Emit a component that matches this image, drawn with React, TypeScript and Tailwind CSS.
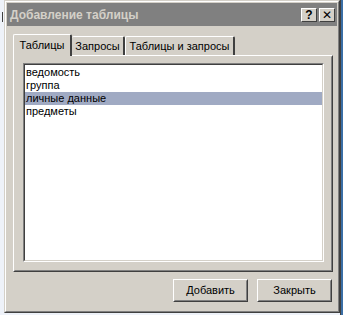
import React from "react";

const items = ["ведомость", "группа", "личные данные", "предметы"];

const font = { fontFamily: '"Liberation Sans", "DejaVu Sans", sans-serif' };

function Btn({ label }: { label: string }) {
  return (
    <button className="w-[75px] h-[23px] border border-t-white border-l-white border-r-[#404040] border-b-[#404040] bg-[#d4d0c8] p-0">
      <div className="w-full h-full border border-t-[#d4d0c8] border-l-[#d4d0c8] border-r-[#808080] border-b-[#808080] flex items-center justify-center text-[11px] text-black">
        {label}
      </div>
    </button>
  );
}

function TitleBtn({ children }: { children: React.ReactNode }) {
  return (
    <div className="w-[16px] h-[14px] bg-[#d4d0c8] border border-t-white border-l-white border-r-[#404040] border-b-[#404040] flex items-center justify-center text-[12px] font-bold leading-none text-black">
      {children}
    </div>
  );
}

export default function App() {
  return (
    <div className="w-[343px] h-[315px] bg-[#eef2f9] flex overflow-hidden" style={font}>
      <div className="w-[4px] h-full flex flex-col">
        <div className="mt-[12px] ml-[2px] w-[1px] h-[10px] bg-[#404040]" />
      </div>
      <div className="w-[336px] h-[313px] border border-t-[#d4d0c8] border-l-[#d4d0c8] border-r-[#404040] border-b-[#404040] bg-[#d4d0c8]">
        <div className="w-full h-full border border-t-white border-l-white border-r-[#808080] border-b-[#808080] p-[1px] flex flex-col">
          {/* title bar */}
          <div className="h-[23px] bg-[#808080] flex items-center pl-[3px] pr-[2px]">
            <span className="text-[12px] font-bold text-[#d4d0c8] flex-1">Добавление таблицы</span>
            <div className="flex gap-[2px]">
              <TitleBtn>?</TitleBtn>
              <TitleBtn>✕</TitleBtn>
            </div>
          </div>
          {/* tabs */}
          <div className="px-[6px] pt-[7px] flex flex-col">
            <div className="flex items-end h-[22px] text-[11px] text-black">
              <div className="relative z-10 w-[59px] h-[22px] -mb-[1px] bg-[#d4d0c8] border-l border-t border-white border-r-2 border-r-[#404040] rounded-t-[2px] flex items-center justify-center">
                Таблицы
              </div>
              <div className="w-[53px] h-[19px] border-t border-white border-r-2 border-r-[#404040] rounded-t-[2px] flex items-center justify-center">
                Запросы
              </div>
              <div className="w-[110px] h-[19px] border-l border-t border-white border-r-2 border-r-[#404040] rounded-t-[2px] flex items-center justify-center">
                Таблицы и запросы
              </div>
            </div>
            <div className="w-[320px] h-[217px] border border-t-white border-l-white border-r-[#404040] border-b-[#404040]">
              <div className="w-full h-full border border-t-[#d4d0c8] border-l-[#d4d0c8] border-r-[#808080] border-b-[#808080] px-[8px] pt-[6px]">
                <div className="w-[301px] h-[199px] border border-t-[#808080] border-l-[#808080] border-r-white border-b-white">
                  <div className="w-full h-full border border-t-[#404040] border-l-[#404040] border-r-[#d4d0c8] border-b-[#d4d0c8] bg-white pt-[1px]">
                    {items.map((it, i) => (
                      <div
                        key={it}
                        className={`h-[13px] pl-[1px] text-[11px] leading-[13px] text-black ${i === 2 ? "bg-[#a0aac3]" : ""}`}
                      >
                        {it}
                      </div>
                    ))}
                  </div>
                </div>
              </div>
            </div>
          </div>
          {/* buttons */}
          <div className="flex justify-end gap-[9px] pr-[5px] pt-[7px]">
            <Btn label="Добавить" />
            <Btn label="Закрыть" />
          </div>
        </div>
      </div>
      <div className="flex-1 h-full bg-[#3a6ea5] border-l border-[#404040]" />
    </div>
  );
}
